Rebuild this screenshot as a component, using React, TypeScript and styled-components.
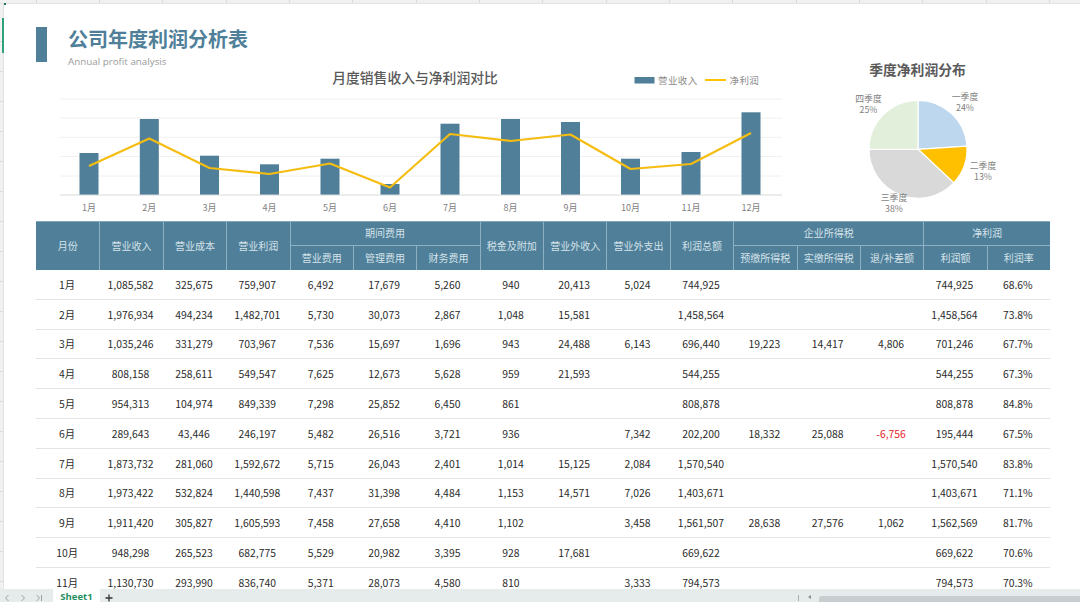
import React from "react";
import styled, { createGlobalStyle } from "styled-components";

const CJK = `"Noto Sans CJK SC", "Noto Sans", sans-serif`;
const STEEL = "#4f7f99";

const Global = createGlobalStyle`
  html, body { margin: 0; padding: 0; background: #fff; overflow: hidden; }
  #root { width: 1080px; height: 602px; }
`;

const Window = styled.div`
  position: relative; width: 1080px; height: 602px; display: flex; flex-direction: column;
  font-family: ${CJK}; background: #fff; overflow: hidden;
`;
const ColumnStrip = styled.div`
  height: 4px; flex: none; background: #f1f1f1; display: grid; border-bottom: 1px solid #e2e2e2; box-sizing: border-box;
  grid-template-columns: 36.5px repeat(17, 63.35px);
`;
const ColumnTick = styled.span`
  border-right: 1px solid #dadada;
`;
const CornerMark = styled.span`
  position: absolute; left: 4px; top: 3px; width: 2px; height: 2px; background: #1c7a4e;
`;
const Body = styled.div`
  flex: 1; min-height: 0; display: flex; overflow: hidden;
`;
const RowStrip = styled.div`
  width: 4px; flex: none; box-sizing: border-box; border-right: 1px solid #e2e2e2; padding: 14px 0 0 2px;
  background: repeating-linear-gradient(to bottom, #f1f1f1 0, #f1f1f1 29px, #dcdcdc 29px, #dcdcdc 30px);
  background-position: 0 8px;
`;
const ActiveMark = styled.div`
  width: 2px; height: 35px; background: #2fa27a;
`;
const Canvas = styled.main`
  flex: 1; min-width: 0; padding: 0 30px 0 32px;
`;
const Heading = styled.header`
  display: flex; gap: 21px; padding-top: 23px; height: 39px;
`;
const HeadingBar = styled.div`
  width: 11px; height: 35px; background: ${STEEL};
`;
const HeadingText = styled.div`
  display: flex; flex-direction: column;
`;
const Title = styled.h1`
  margin: 0; font-size: 20px; line-height: 23px; font-weight: 700; color: ${STEEL}; white-space: nowrap;
`;
const Subtitle = styled.p`
  margin: 0; font-family: "Open Sans", sans-serif; font-size: 9.8px; line-height: 16px; margin-top: 4px; color: #9a9a9a; white-space: nowrap;
`;
const Charts = styled.section`
  display: grid; grid-template-columns: 760px 1fr; height: 150px; margin-bottom: 5px;
`;
const ChartSvg = styled.svg`
  display: block; width: 100%; height: 150px; overflow: visible;
`;
const SheetTable = styled.table`
  width: 1014px; border-collapse: separate; border-spacing: 0; table-layout: fixed;
`;
const HeadCell = styled.th<{ $first?: boolean }>`
  height: 24.5px; padding: 0; background: ${STEEL}; color: #d6e3ea; font-weight: 400; font-size: 10px;
  text-align: center; white-space: nowrap; box-sizing: border-box; line-height: 14px;
  border-left: ${(p) => (p.$first ? "0" : "1px solid #8db0c2")};
  border-bottom: 1px solid #8db0c2;
`;
const TopHead = styled(HeadCell)`
  border-top: 1px solid #7fa6ba;
`;
const TallHead = styled(TopHead)`
  border-bottom: 0;
`;
const LowHead = styled(HeadCell)`
  border-bottom: 0;
`;
const Cell = styled.td<{ $neg?: boolean }>`
  height: 29.8px; padding: 1px 1px 0 0; text-align: center; font-size: 10.4px; color: ${(p) => (p.$neg ? "#e8242a" : "#2b2b2b")};
  border-bottom: 1px solid #e4e4e4; box-sizing: border-box; white-space: nowrap; line-height: 14px;
`;
const TabBar = styled.footer`
  height: 13px; flex: none; background: #e6ebec; display: flex; align-items: stretch;
`;
const TabNav = styled.div`
  width: 53px; flex: none; display: flex; align-items: flex-end; gap: 8px; padding-left: 3px; box-sizing: border-box; color: #9aa0a2;
`;
const Tab = styled.div`
  width: 47px; flex: none; background: #fff; color: #1f8f5f; font-size: 9.5px; font-weight: 700; font-family: "Open Sans", sans-serif;
  line-height: 15px; text-align: center; overflow: hidden;
`;
const AddTab = styled.div`
  width: 698px; flex: none; padding-left: 5px; box-sizing: border-box; color: #333; display: flex; align-items: flex-end;
`;
const ScrollArea = styled.div`
  flex: 1; display: flex; align-items: flex-end; gap: 6px;
`;
const ScrollDivider = styled.span`
  width: 1px; height: 6px; background: #a8adb0; margin-bottom: 1px;
`;
const ScrollArrow = styled.span`
  width: 0; height: 0; margin: 0 0 3px 3px; border-style: solid; border-width: 2px 3px 2px 0; border-color: transparent #8a8f91 transparent transparent;
`;
const ScrollThumb = styled.div`
  flex: 1; height: 6px; background: #c9cdcf; border-radius: 3px 0 0 0; margin-left: 2px;
`;

const heads = ["营业收入", "营业成本", "营业利润"];
const rows: string[][] = [
  ["1月","1,085,582","325,675","759,907","6,492","17,679","5,260","940","20,413","5,024","744,925","","","","744,925","68.6%"],
  ["2月","1,976,934","494,234","1,482,701","5,730","30,073","2,867","1,048","15,581","","1,458,564","","","","1,458,564","73.8%"],
  ["3月","1,035,246","331,279","703,967","7,536","15,697","1,696","943","24,488","6,143","696,440","19,223","14,417","4,806","701,246","67.7%"],
  ["4月","808,158","258,611","549,547","7,625","12,673","5,628","959","21,593","","544,255","","","","544,255","67.3%"],
  ["5月","954,313","104,974","849,339","7,298","25,852","6,450","861","","","808,878","","","","808,878","84.8%"],
  ["6月","289,643","43,446","246,197","5,482","26,516","3,721","936","","7,342","202,200","18,332","25,088","-6,756","195,444","67.5%"],
  ["7月","1,873,732","281,060","1,592,672","5,715","26,043","2,401","1,014","15,125","2,084","1,570,540","","","","1,570,540","83.8%"],
  ["8月","1,973,422","532,824","1,440,598","7,437","31,398","4,484","1,153","14,571","7,026","1,403,671","","","","1,403,671","71.1%"],
  ["9月","1,911,420","305,827","1,605,593","7,458","27,658","4,410","1,102","","3,458","1,561,507","28,638","27,576","1,062","1,562,569","81.7%"],
  ["10月","948,298","265,523","682,775","5,529","20,982","3,395","928","17,681","","669,622","","","","669,622","70.6%"],
  ["11月","1,130,730","293,990","836,740","5,371","28,073","4,580","810","","3,333","794,573","","","","794,573","70.3%"],
];

// Chart coordinates are relative to the chart box, whose origin is page (36, 66).
const OX = 36, OY = 66;
const months = [
  { m: "1月", x: 89, top: 153, y: 166 }, { m: "2月", x: 149.3, top: 119, y: 138.5 },
  { m: "3月", x: 209.5, top: 155.7, y: 168 }, { m: "4月", x: 269.5, top: 164.3, y: 174 },
  { m: "5月", x: 330, top: 158.7, y: 163.5 }, { m: "6月", x: 390, top: 184, y: 187.5 },
  { m: "7月", x: 450, top: 123.7, y: 134 }, { m: "8月", x: 510.5, top: 119, y: 141 },
  { m: "9月", x: 570.5, top: 122, y: 134.5 }, { m: "10月", x: 630.5, top: 158.7, y: 169 },
  { m: "11月", x: 691, top: 152, y: 164 }, { m: "12月", x: 751, top: 112.3, y: 133 },
];
const grid = [99, 118, 137.3, 156.5, 176];
const BASE = 195;

function SalesChart() {
  return (
    <ChartSvg viewBox="0 0 760 150" fontFamily={CJK}>
      <g transform={`translate(${-OX} ${-OY})`}>
        <text x={415} y={83} fontSize={13.8} fontWeight={500} fill="#595959" textAnchor="middle">月度销售收入与净利润对比</text>
        <rect x={634.5} y={77} width={20} height={6.5} fill={STEEL} />
        <text x={658} y={84} fontSize={9.5} letterSpacing={0.4} fill="#8c8c8c">营业收入</text>
        <line x1={705} y1={80} x2={726} y2={80} stroke="#ffc000" strokeWidth={2} />
        <text x={729.5} y={84} fontSize={9.5} letterSpacing={0.4} fill="#8c8c8c">净利润</text>
        {grid.map((y) => <line key={y} x1={60} x2={782} y1={y} y2={y} stroke="#f0f0f0" strokeWidth={1} />)}
        {months.map((d) => <rect key={d.m} x={d.x - 9.5} y={d.top} width={19} height={BASE - d.top} fill={STEEL} />)}
        <line x1={60} x2={782} y1={BASE} y2={BASE} stroke="#d9d9d9" strokeWidth={1} />
        <polyline points={months.map((d) => `${d.x},${d.y}`).join(" ")} fill="none" stroke="#f5bd11" strokeWidth={2.2} strokeLinejoin="round" />
        {months.map((d) => <text key={d.m} x={d.x} y={210.5} fontSize={9} fill="#7f7f7f" textAnchor="middle">{d.m}</text>)}
      </g>
    </ChartSvg>
  );
}

const CX = 918, CY = 149.3, R = 49;
const slices = [
  { v: 0.24, c: "#bdd7ee" }, { v: 0.13, c: "#ffc000" }, { v: 0.38, c: "#d9d9d9" }, { v: 0.25, c: "#e2efda" },
];
function slicePath(a0: number, a1: number) {
  const p = (a: number) => [CX + R * Math.sin(a * 2 * Math.PI), CY - R * Math.cos(a * 2 * Math.PI)];
  const [x0, y0] = p(a0);
  const [x1, y1] = p(a1);
  return `M${CX} ${CY}L${x0} ${y0}A${R} ${R} 0 ${a1 - a0 > 0.5 ? 1 : 0} 1 ${x1} ${y1}Z`;
}
const pieLabels = [
  { x: 965, a: "一季度", b: "24%", y: 100 },
  { x: 983, a: "二季度", b: "13%", y: 169 },
  { x: 894, a: "三季度", b: "38%", y: 201 },
  { x: 868.5, a: "四季度", b: "25%", y: 102 },
];

function PieChart() {
  let acc = 0;
  return (
    <ChartSvg viewBox="0 0 254 150" fontFamily={CJK}>
      <g transform={`translate(${-796} ${-OY})`}>
        <text x={917.5} y={75} fontSize={13.8} fontWeight={700} fill="#595959" textAnchor="middle">季度净利润分布</text>
        {slices.map((s) => {
          const d = slicePath(acc, acc + s.v);
          acc += s.v;
          return <path key={s.c} d={d} fill={s.c} stroke="#fff" strokeWidth={1.2} />;
        })}
        {pieLabels.map((l) => (
          <text key={l.a} fontSize={8.8} fill="#7f7f7f" textAnchor="middle">
            <tspan x={l.x} y={l.y}>{l.a}</tspan>
            <tspan x={l.x} y={l.y + 11}>{l.b}</tspan>
          </text>
        ))}
      </g>
    </ChartSvg>
  );
}

function NavIcon({ d }: { d: string }) {
  return (
    <svg width="8" height="9" viewBox="0 0 8 9" fill="none" stroke="currentColor" strokeWidth="1">
      <path d={d} />
    </svg>
  );
}

export default function App() {
  return (
    <Window>
      <Global />
      <CornerMark />
      <ColumnStrip>
        {Array.from({ length: 18 }, (_, i) => <ColumnTick key={i} />)}
      </ColumnStrip>
      <Body>
        <RowStrip><ActiveMark /></RowStrip>
        <Canvas>
          <Heading>
            <HeadingBar />
            <HeadingText>
              <Title>公司年度利润分析表</Title>
              <Subtitle>Annual profit analysis</Subtitle>
            </HeadingText>
          </Heading>
          <Charts>
            <SalesChart />
            <PieChart />
          </Charts>
          <SheetTable>
            <thead>
              <tr>
                <TallHead rowSpan={2} $first>月份</TallHead>
                {heads.map((h) => <TallHead key={h} rowSpan={2}>{h}</TallHead>)}
                <TopHead colSpan={3}>期间费用</TopHead>
                <TallHead rowSpan={2}>税金及附加</TallHead>
                <TallHead rowSpan={2}>营业外收入</TallHead>
                <TallHead rowSpan={2}>营业外支出</TallHead>
                <TallHead rowSpan={2}>利润总额</TallHead>
                <TopHead colSpan={3}>企业所得税</TopHead>
                <TopHead colSpan={2}>净利润</TopHead>
              </tr>
              <tr>
                <LowHead>营业费用</LowHead>
                <LowHead>管理费用</LowHead>
                <LowHead>财务费用</LowHead>
                <LowHead>预缴所得税</LowHead>
                <LowHead>实缴所得税</LowHead>
                <LowHead>退/补差额</LowHead>
                <LowHead>利润额</LowHead>
                <LowHead>利润率</LowHead>
              </tr>
            </thead>
            <tbody>
              {rows.map((r) => (
                <tr key={r[0]}>
                  {r.map((c, i) => <Cell key={i} $neg={c.startsWith("-")}>{c}</Cell>)}
                </tr>
              ))}
            </tbody>
          </SheetTable>
        </Canvas>
      </Body>
      <TabBar>
        <TabNav>
          <NavIcon d="M5.5 2 2.5 5l3 3" />
          <NavIcon d="M2.5 2l3 3-3 3" />
          <NavIcon d="M1.5 2l3 3-3 3M6.5 2v6" />
        </TabNav>
        <Tab>Sheet1</Tab>
        <AddTab>
          <svg width="8" height="8" viewBox="0 0 8 8" fill="none" stroke="currentColor" strokeWidth="1.3">
            <path d="M4 .5v7M.5 4h7" />
          </svg>
        </AddTab>
        <ScrollArea>
          <ScrollDivider />
          <ScrollArrow />
          <ScrollThumb />
        </ScrollArea>
      </TabBar>
    </Window>
  );
}
